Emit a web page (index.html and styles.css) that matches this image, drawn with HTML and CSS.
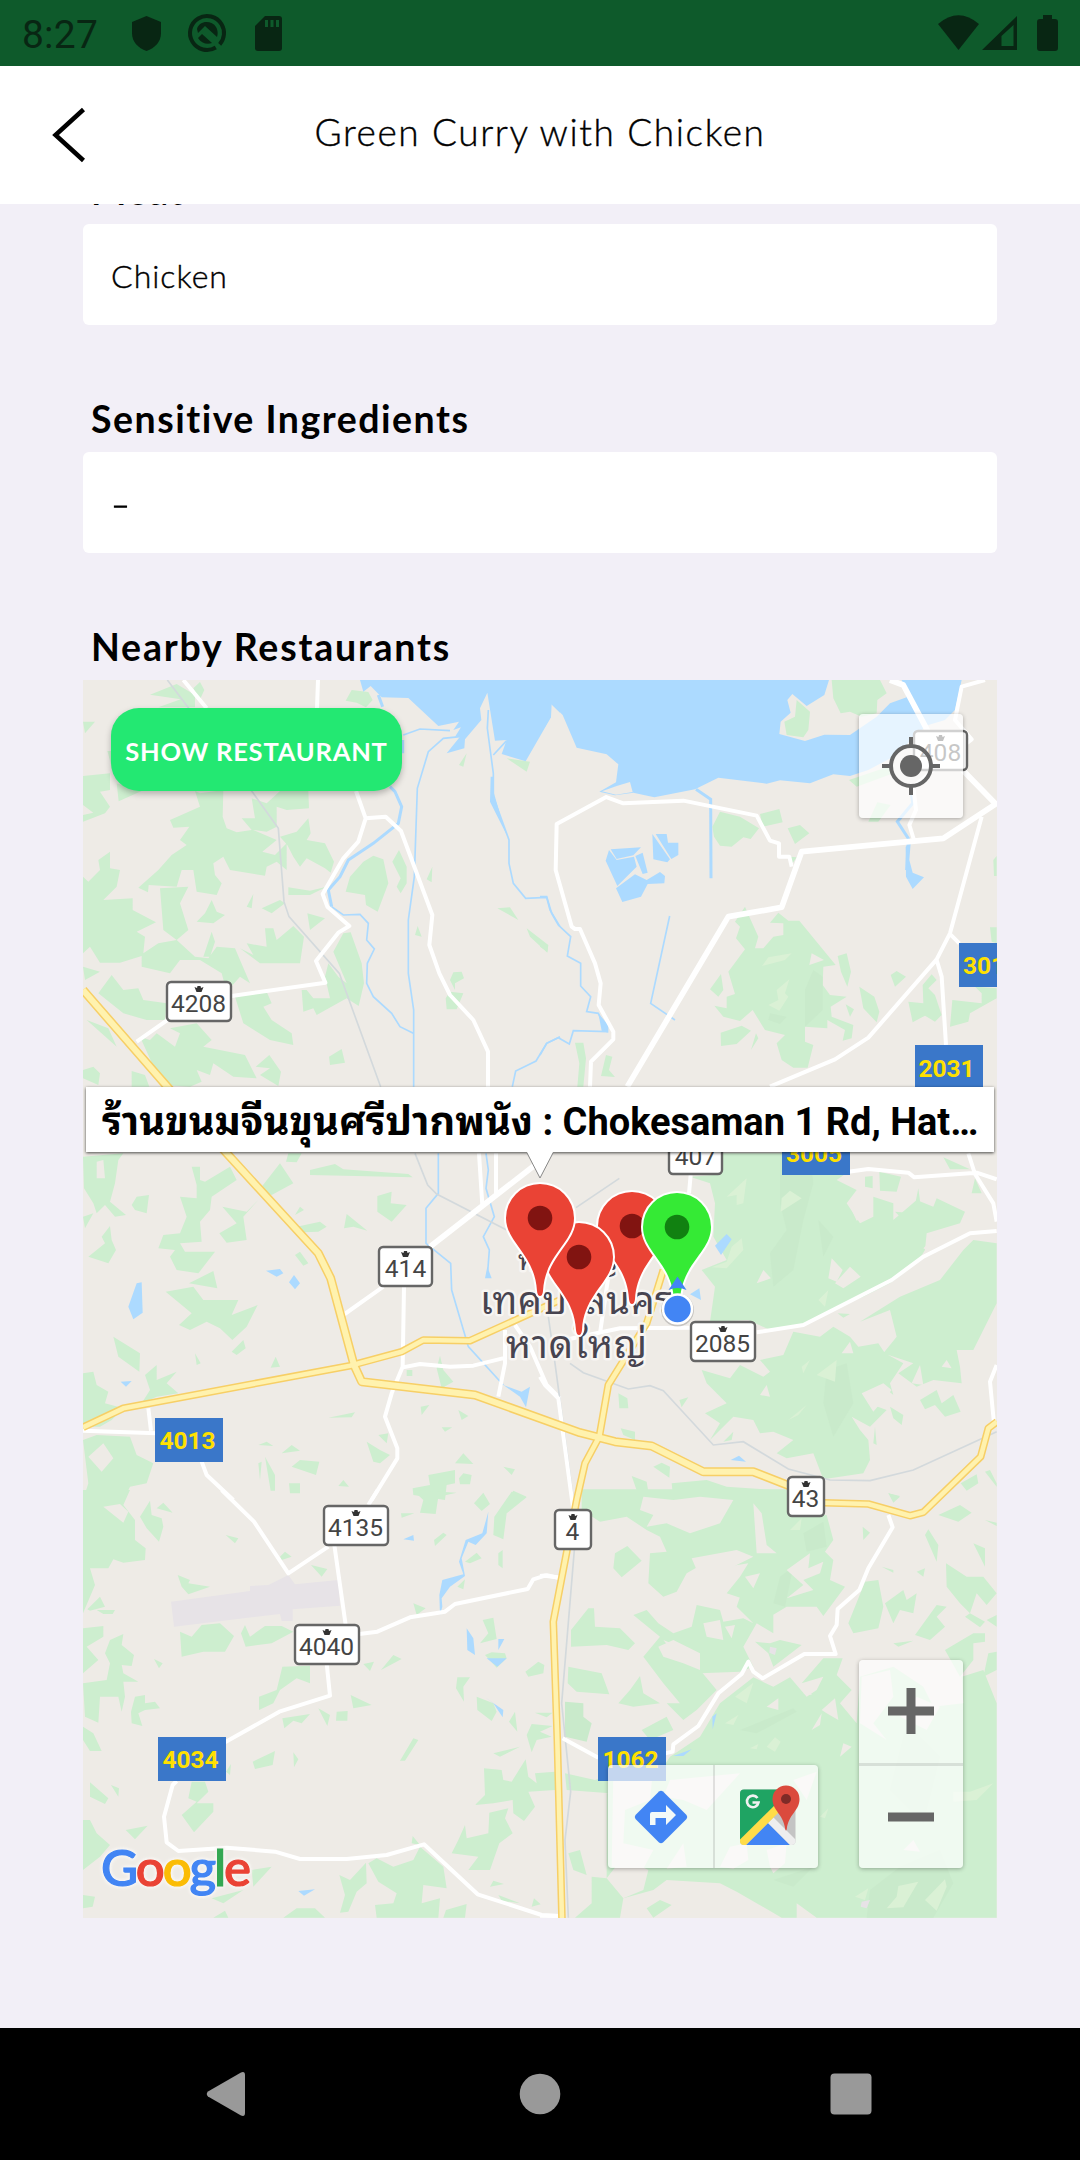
FILE: index.html
```html
<!DOCTYPE html>
<html lang="en">
<head>
<meta charset="utf-8">
<title>Green Curry with Chicken</title>
<link rel="stylesheet" href="styles.css">
</head>
<body>
<div class="phone">
  <div class="status">
    <span class="clock">8:27</span>
    <svg class="status-left" width="152" height="66" viewBox="130 0 152 66">
      <path d="M146.500 16 161 22V33C161 42 155 48 146.500 51 138 48 132 42 132 33V22Z"/>
      <circle cx="207" cy="33" r="17" fill="none" stroke="#082613" stroke-width="4" stroke-dasharray="101 5.800" transform="rotate(59 207 33)"/>
      <path d="M197 29C199 20 212 20 216 27 219 32 217 37 217 37L205 26 198 33ZM198 38 202 34 212 43C207 45 201 43 198 38Z"/>
      <path d="M265 16H279Q282 16 282 19V48Q282 51 279 51H258Q255 51 255 48V26Z"/>
      <path d="M266.500 20V27M272 20V27M277.500 20V27" stroke="#0e5a2b" stroke-width="3"/>
    </svg>
    <svg class="status-right" width="122" height="66" viewBox="937 0 122 66">
      <path d="M938 24Q958.500 6.500 979 24L958.500 50Z"/>
      <path fill-rule="evenodd" d="M982 50 1017 16V50ZM1001.500 46H1013.500V25L1001.500 36Z"/>
      <path d="M1043 15H1052V19H1055Q1058 19 1058 22V48Q1058 51 1055 51H1040Q1037 51 1037 48V22Q1037 19 1040 19H1043Z"/>
    </svg>
  </div>
  <header class="bar">
    <svg class="back" width="36" height="56" viewBox="0 0 36 56"><path d="M31.500 2.500 3.500 28 31.500 53.500" fill="none" stroke="#000" stroke-width="4.500"/></svg>
    <h1 class="title">Green Curry with Chicken</h1>
  </header>
  <main class="content">
    <section class="field">
      <h2 class="label">Meat</h2>
      <div class="value">Chicken</div>
    </section>
    <section class="field">
      <h2 class="label label-sensitive">Sensitive Ingredients</h2>
      <div class="value"><span class="dash">-</span></div>
    </section>
    <section class="field">
      <h2 class="label label-nearby">Nearby Restaurants</h2>
      <div class="map">
        <svg class="tiles" width="914" height="1238" viewBox="83 680 914 1238">
          <defs>
            <path id="pin" d="M-34 0A34 34 0 0 1 34 0C34 25 5 36 3 73Q2.500 78 0 78-2.500 78-3 73C-5 36-34 25-34 0Z"/>
            <path id="crown" d="M-4.500-2-2-1-1.500-3H1.500L2-1 4.500-2 2.500 3H-2.500Z"/>
            <g id="s4"><rect x="1" y="1" width="64" height="39" rx="4"/><use href="#crown" x="33" y="8"/></g>
            <g id="s3"><rect x="1" y="1" width="53" height="39" rx="4"/><use href="#crown" x="27.500" y="8"/></g>
            <g id="s2"><rect x="1" y="1" width="36" height="39" rx="4"/><use href="#crown" x="19" y="8"/></g>
          </defs>
          <g class="land">
            <g transform="translate(80 670) scale(.33333)">
              <path class="wood" d="M210 74 290 42 345 75V112H235L302 88ZM340 55 360 36 373 60 358 92ZM797 92 815 60 865 66 878 90 858 112 830 98ZM9 155H45L15 190ZM82 243H95V290ZM9 318 90 310V360L60 365 90 410 75 430 9 455V435L40 428 9 405ZM110 340 185 363 116 394ZM345 363 360 370 430 360 428 440 440 475 470 487 515 480 485 445H525L515 385 560 400 600 363H685L687 415 620 420 590 410V470L560 485 520 480 590 510 547 545 585 555 620 520V600L590 575 560 590 555 617 450 600 430 560 400 580 405 615 425 640 410 675 350 665 340 600 305 600 290 650 206 645 204 667 175 653 235 600 275 555 320 525 300 510 328 470 280 473 270 450 360 410ZM600 500 650 485 685 445 692 490 680 510 735 520 762 575 752 608 735 595 680 565 660 590 640 560 622 525ZM625 652 690 662 740 650 690 675H625ZM9 620 25 635 60 600 55 570 90 545V595L120 600 110 650 70 690 158 685V720L228 757 170 785 195 800 190 850 235 820 290 810 345 860 385 865 410 830 465 835 480 870 510 940 480 920 440 965 425 910 360 870 300 870 270 910 185 890V858L120 878H60L30 830 9 850ZM240 655 325 650 300 700 325 780 290 810 250 780ZM375 730 395 690 410 725 435 735 400 760 350 755ZM480 835 520 855 500 820 560 830 555 775 580 775 590 810 640 768 672 800 660 880 540 880ZM370 860 395 785 405 815 390 860ZM545 715 600 690 615 700 575 730ZM500 710 520 672 515 715ZM682 730 735 745 690 780ZM797 665 810 620 850 575 880 557 910 568 925 640 893 725 858 705 855 675ZM937 575 957 540 980 590V640L962 670 950 650 962 625ZM1040 628 1057 590 1055 637ZM760 845 790 790 812 787 845 880 852 940 836 1008 800 985 710 1035 700 1015 670 1025 665 960 680 960 700 985 750 985 735 920 745 880 775 920 800 940ZM1097 985 1110 965 1150 970 1130 1018H1100ZM1110 930 1120 907 1145 905 1152 925 1125 940V960ZM1005 795 1013 768 1025 800ZM1137 285 1160 250 1150 290ZM1280 265 1350 275 1340 305ZM1252 715 1290 712 1315 750ZM1340 775 1405 825 1402 848 1350 800ZM747 1160 785 1137 795 1178 750 1185ZM527 1190 568 1155 603 1205 595 1248 540 1215 570 1195ZM465 980 560 965 575 1000 550 1010 575 1050 635 1090 640 1125 570 1110 490 1060ZM180 1100 210 1110 230 1090 285 1130 300 1090 270 1075 350 1060 395 1110 370 1130 495 1155 530 1225 460 1220 400 1180 390 1215 350 1200 365 1235 330 1250 250 1245 225 1200ZM9 890 60 905 15 930ZM55 970 95 915 130 960 175 955 190 990 260 1000 255 1050 200 1050 130 1030ZM20 1050 85 1075 110 1130ZM9 1200 40 1190 60 1210 55 1245 9 1225ZM155 1250V1203L195 1215 208 1250Z"/>
              <path class="water" d="M840 30H1440V128L1413 102V142L1337 274 1265 252 1280 210 1245 212 1222 68 1200 115 1204 150 1155 208 1153 235 1100 250 1140 200H1125L1143 172 1120 180 1137 155 1075 168 985 84 905 82 872 48 850 65ZM1232 320H1240L1242 370 1265 450 1285 505 1230 395Z"/>
              <path class="stream" d="M970 195 1020 177 1110 182M1140 200 1090 205 1045 245 1012 355 1003 620 985 750V910L1001 1020V1250M1225 120 1222 175 1240 310V380L1287 510V580L1300 640 1337 685 1400 682 1410 720 1440 770M1240 255 1280 212M1297 1250 1307 1203 1368 1173 1400 1120 1440 1100"/>
              <path class="stream wide" d="M895 75 908 110M968 210V250M930 350 945 365 965 410 955 460 880 520 805 570 780 620 745 660 755 710"/>
              <path class="stream" d="M755 710 790 735 840 733 865 760 860 810 883 837 862 880 860 940 880 980 935 1030 960 1070 1000 1090"/>
            </g>
            <g transform="translate(540 670) scale(.33333)">
              <path class="water" d="M-2 30H867L853 75 800 108 757 72 742 90 752 128 722 155 718 192 795 213 853 194 930 195 1010 140 1050 100 1100 82 1085 30H1265L1245 120 1215 150 1165 165 1120 200 1095 230 1060 260 985 300 930 318 880 313 810 340 720 331 680 341 535 323 465 358 343 382 280 368 225 376 178 365 228 337 235 283 200 253 110 233 68 135 35 102 33 140-2 197ZM197 572 207 540 230 570 282 560 290 590 232 648ZM212 538 303 532 280 556 230 567ZM286 558 308 548 323 608 308 612ZM337 492 390 568 382 577 340 568ZM347 492H380L384 518H415V555L394 567ZM228 655 285 613 320 630 360 606 375 618 373 640 323 642 303 680 247 696ZM1097 530 1112 520 1108 570 1118 608 1152 622 1118 657 1098 620ZM175 1030 205 1065V1088L185 1082Z"/>
              <path class="ground" d="M186 364 230 348 270 336 278 366 228 374Z"/>
              <path class="stream" d="M389 738 332 1000 405 1050M0 680H20L35 730 55 765 92 800 82 858 122 880V948L152 980 140 1025 175 1030 200 1085 100 1082 88 1122 55 1103 20 1120 0 1155"/>
              <path class="stream wide" d="M468 358 512 388 513 625M1112 350 1118 400 1072 455 1105 505 1100 600"/>
              <path class="wood" d="M875 30H1020L1040 70 1012 90 1010 130 965 140 930 125 902 130 880 85ZM770 90 810 125 805 180 790 202 740 195 733 155 765 140ZM927 330 1060 285V310L950 350ZM1012 397 1052 405 1015 455H985ZM517 470 540 425 600 440 657 475 632 507 610 502 575 530 540 527 522 500ZM660 432 718 417 728 457 668 470ZM743 475 780 465 808 490 765 522ZM750 560 770 562 758 580ZM585 755 615 710 630 745 655 800 645 835H670L700 800 730 795V760L690 758 715 728 745 752H778L887 885 850 890 848 945 870 975 920 980 872 1010 875 1040 940 1065 935 1105 908 1112 915 1080 862 1050V1075L795 1070V1115L820 1125 803 1193H760L725 1170 710 1120 735 1095 675 1080 638 1020 600 1053 550 1040 523 1007 560 1015V980L585 972 565 905 615 838 588 805 600 770ZM510 958 543 912 550 960 535 980ZM542 1088 605 1067 633 1082 590 1122 543 1128ZM633 1140 648 1090 655 1105ZM893 858 920 850 933 905 922 950 903 905ZM917 1003 942 1018 930 1040ZM958 950 1003 980 1018 1025 1010 1057 970 1015ZM1052 915 1070 903 1098 920 1065 950ZM1105 995 1150 1000 1148 945 1175 913 1190 930 1165 955 1185 975 1205 1035 1185 1055 1155 1037 1118 1057ZM1237 990 1325 1000V970L1305 950 1370 955V985L1290 1030 1285 1055 1230 1070ZM1350 772H1370V820L1355 815ZM1360 570 1370 558V618H1362ZM105 1118H130L138 1165 130 1250H112L118 1180ZM183 1218 198 1155 217 1160 207 1200 225 1221ZM0 810 24 830 22 845 0 830Z"/>
              <path class="wood-light" d="M666 888 685 862 755 850 735 870ZM685 1005 715 990 710 960 748 928 735 970 745 980 718 1022Z"/>
              <path class="wood-dark" d="M820 900 848 920V1020L795 1070V960ZM690 1030 740 1040 720 1062 685 1050Z"/>
              <path class="ground" d="M808 885 815 850 852 870Z"/>
            </g>
            <g transform="translate(80 1070) scale(.33333)">
              <path class="wood" fill-rule="evenodd" d="M9 260 130 250 115 270 105 340 90 395 138 435 105 440 75 405 50 430 40 400 12 355ZM50 275V325H75L70 270ZM155 405 170 380 207 375 200 430 165 420ZM9 440 40 430 15 475ZM25 560 75 520 65 500 90 468 95 510 108 540 85 580ZM335 290H360V330L375 335 450 290 470 330 395 380 390 420 360 455 365 515 300 520 315 545 405 545 355 610 290 600 270 560 285 540 235 535 250 495 300 490 320 440 300 380 350 385V345ZM427 410 500 425 535 390 490 440 500 510 440 518 418 490 470 460ZM545 350 600 280 640 340 575 375 555 370ZM618 275 625 250H665L650 277ZM645 435 660 410 672 420ZM650 470 720 455 740 470 715 485 670 487ZM645 555 660 545 685 580 670 587ZM690 300 765 282 790 298 985 312 998 322 690 315ZM892 378 935 365 932 400 980 405 935 455 892 425ZM792 475 800 432 862 482 820 470ZM327 640 400 603 412 655ZM257 665 340 650 370 690H475L455 735 533 705 500 770 457 810 420 775 380 755 330 780 297 765 335 730ZM100 800 180 850 178 905 115 860ZM455 845 490 810 497 835 470 855ZM345 850 362 880 350 885ZM572 893 587 860 600 890ZM9 910 40 905 50 945 85 965 75 1000 130 1015 95 1050 60 1070H30L9 1060ZM195 915 230 885V930L290 905 260 940 295 970 230 980 185 1000 210 960ZM1070 895 1080 857 1090 900 1120 935 1085 955ZM980 900 997 900V918H980ZM9 1110 50 1095 150 1100 170 1155 220 1180 200 1240 150 1250 130 1290H9L25 1240ZM25 1160 65 1205 100 1165 70 1120ZM535 1125 560 1115 580 1128ZM605 1150 635 1125 660 1142ZM555 1160 585 1215V1262H572ZM535 1180 545 1175 540 1230ZM635 1190 660 1170 718 1175 708 1215ZM627 1240H660V1270L630 1270ZM775 1248 790 1230 807 1250ZM745 1043 825 1027 815 1042ZM860 1115 900 1140 930 1155 900 1180 880 1175ZM895 1095 925 1090 920 1120ZM1022 1010 1048 1005 1025 1035ZM1135 1020 1165 1038 1145 1050ZM1085 1072H1117L1095 1085ZM1045 1215 1125 1200V1240L1100 1245 1095 1290 1000 1275 998 1255 1050 1245ZM1137 1225 1150 1210 1175 1215 1170 1243H1140ZM1125 1180 1150 1150 1180 1182ZM1270 1190 1305 1198 1295 1215ZM1280 1290 1300 1262 1340 1280Z"/>
              <path class="water" d="M558 602 600 597 610 610 590 620ZM627 637 642 615 660 640 645 658ZM170 640 185 637 188 728 160 748 145 710ZM122 935 155 933 138 950ZM1270 945 1325 965 1350 950 1338 1012 1320 980ZM1215 625 1222 590 1235 625Z"/>
              <path class="stream" d="M1075 250V370L1038 415V520L1112 580 1115 660 1165 830 1270 945M1218 250 1225 300 1218 355 1243 440 1210 500 1228 540 1222 620"/>
            </g>
            <g transform="translate(540 1070) scale(.33333)">
              <path class="wood" d="M450 320 520 315 500 250H900L925 305 890 330 950 360 920 400 960 460 1000 440 1000 380 1060 400 1060 450 1130 390 1180 410 1190 385 1275 425 1260 460 1160 490 1155 540 1130 580 1050 640 970 680 850 730 780 765 690 780 625 750 510 755 525 650 485 600 560 570 520 500 525 400 510 340ZM485 900 570 925 600 885 670 920 690 905 660 870 730 855 760 785 840 800 880 770 930 800 955 830 1015 820 1035 850 1090 880 1050 940 1060 975 1030 950 970 970 985 1000 1040 1020 990 1070 935 1040 960 1080 985 1110 990 1170 970 1210 850 1228 820 1150 740 1165 710 1150 760 1110 700 1085 660 1090 640 1050 580 1040 510 1110 540 1060 495 1030 560 1000 500 940ZM1080 680 1200 630 1270 540 1300 510 1370 520V700L1300 840H1250L1260 890 1265 940 1180 930 1130 950 1075 910 1120 880 1030 850 1070 800 1050 720 960 755ZM1018 305 1083 320 1070 365 1020 362ZM975 320 998 318V355L975 350ZM1065 425 1120 430 1135 355 1145 430 1080 440ZM1210 262 1290 298H1230ZM1295 370 1305 325 1325 370ZM1140 990 1190 960 1205 1000 1240 975 1262 1025 1215 1040 1185 1005 1155 1018ZM1050 1010 1090 1035 1085 1065 1060 1045ZM1262 1240 1310 1213 1315 1240 1280 1262ZM1335 1205 1350 1200 1370 1240V1250ZM1045 1270 1080 1278 1060 1290ZM235 970 262 985 265 1015H238ZM418 990 445 982 425 1012ZM242 1075 285 1085V1110L250 1095ZM340 1190 365 1178 390 1190 388 1223ZM275 1218 320 1235 325 1265 350 1290H300ZM395 1240 500 1230 560 1250 700 1260 740 1290H400ZM1000 1120 1005 1070 1010 1125ZM893 730 930 732 910 743ZM550 1115 580 1085 575 1110Z"/>
              <path class="wood-dark" d="M720 250H810L820 340 790 450 760 600 700 650 690 550 740 480 720 400ZM860 900 920 880 940 1000 880 1100 850 1000ZM835 450 880 500 850 560Z"/>
              <path class="wood-light" d="M725 385 750 362 785 385 722 425ZM560 380 620 325 610 400 590 405 590 375ZM515 592 560 575 575 530 605 505 610 540 560 595ZM745 1050 800 1005 775 1035ZM830 915 890 870 885 935ZM785 890 810 870 790 910ZM835 690 865 660 855 710Z"/>
              <path class="ground" d="M935 420 960 385 975 440 950 452ZM865 625 875 565 908 600 890 635ZM885 640 930 590 962 620 910 655ZM965 970 1030 940 1055 960 1000 1025ZM650 640 670 600 693 625ZM1150 535 1190 495 1235 520 1190 540 1200 565ZM1205 890 1220 870 1235 895ZM660 975 680 945 690 980ZM1115 940 1140 885 1150 945ZM905 850 930 815 940 850Z"/>
              <path class="water" d="M525 527 560 492 575 508 543 555ZM450 673 478 655 483 690ZM572 1170 597 1157 618 1175Z"/>
            </g>
            <g transform="translate(80 1490) scale(.33333)">
              <path class="wood" fill-rule="evenodd" d="M9 0H150L130 45 165 90V150L197 175 195 210 130 218 100 208 85 235H30L45 285 9 370V290ZM70 50 130 98 145 65 120 42ZM180 80 210 32 215 75 245 85 250 110 237 155 200 115ZM230 55 250 38 278 68ZM437 135 475 145 465 160ZM600 200 615 185 635 200 605 210ZM693 225 742 237 725 260ZM22 358 60 320 75 350 30 362ZM50 360H105L98 372H70ZM293 255 330 270 325 280 390 290 325 313 305 290ZM300 425 335 440 365 405 420 400 462 438 435 485H370L305 500ZM483 430 495 405 510 440 555 408 605 408 640 425 575 460 497 470ZM9 415 70 408V440L20 470 55 510 9 550ZM75 490 90 450 130 432 125 465 162 495 155 528 125 525 130 550 175 575 130 575 135 620 125 665 115 620H60L55 698 15 680 9 580 80 570 90 520ZM222 507 248 520 237 535ZM165 620 195 615V640L225 635 240 655 195 660 175 670 187 708 155 700 153 665ZM9 710 40 730 65 783H30L9 750ZM537 620 590 600 607 530 690 527V580L650 565 600 600 580 640 537 660ZM607 685 690 672 665 700 640 692 613 715ZM715 655 750 675 742 708ZM770 665 803 663 802 692H768ZM812 615 875 645 820 655ZM850 522 882 515 870 543ZM903 540 940 495 965 507ZM1000 340 1037 355 1010 375ZM963 70H1003L965 83ZM998 0 1130 8 1075 20 1067 72 1020 68 1030 30ZM1182 40 1210 8 1230 42 1205 63ZM1243 80 1295 5 1340 22 1280 70 1270 148 1240 135ZM1062 150 1090 128 1100 135 1065 168ZM1155 215 1190 188 1205 205 1170 220ZM1255 190 1268 180V235L1255 225ZM1132 290 1155 268 1150 298ZM1200 460 1225 430 1208 390 1240 383 1250 447ZM1215 495 1235 487 1275 490 1280 505 1250 533ZM1336 545 1375 515 1393 525 1390 550 1345 560ZM1128 595 1132 562H1170L1150 590 1152 635ZM1190 620 1240 640 1250 665 1235 693 1192 660ZM1287 695 1305 665 1312 725ZM1340 735 1355 702 1418 708 1380 725 1415 740 1370 750 1355 787ZM1240 790 1320 770 1260 800ZM1365 668H1418L1400 682ZM960 812 1000 745 1015 750 975 812ZM640 787 655 808 642 832ZM518 815 585 783 578 825 525 837ZM438 845 453 822 450 855ZM335 875H375L385 905 350 940H400V965L342 1027 305 975 350 935 325 925ZM30 877 85 925 75 942 30 920ZM93 885 117 895 115 920ZM137 1020 203 1007 165 1048ZM9 990H30L50 1030 90 1065 60 1100 9 1140ZM1212 835 1265 840 1270 870 1295 875 1337 808 1345 860 1370 880 1365 850 1425 845V900L1345 905 1365 950 1332 993 1300 970 1298 930 1240 940 1185 945 1215 915ZM1228 968 1285 955 1275 985 1298 1030 1258 1060 1230 1140 1165 1140 1195 1100 1115 1090 1135 1050 1155 1005 1160 1045 1225 1030ZM865 1120 890 1105 940 1130 1000 1110 1020 1070 1090 1130 1100 1195 1030 1185 1025 1240 1080 1225 1075 1283H890L885 1245 940 1240 950 1210 895 1175ZM778 1155 810 1170 858 1118 860 1180 830 1205 805 1265 780 1268 795 1215ZM610 1283 650 1255H705L735 1283ZM400 1283 435 1262 445 1283ZM9 1215 45 1220 38 1250 9 1255ZM515 1140 575 1130 520 1190ZM395 1225 490 1200 430 1240ZM1255 1215 1320 1240 1265 1232ZM1230 1190 1240 1172 1272 1182ZM1355 1250 1362 1225 1382 1243ZM1098 1260 1160 1242 1155 1283H1090ZM995 1060 998 1038 1020 1065Z"/>
              <path class="airport" d="M273 335 510 303V288L565 285 625 255 645 283 775 270 780 347 638 358V393H605L600 372 282 410Z"/>
              <path class="water" d="M970 148 1000 135 1002 152ZM1225 65 1220 130 1187 165 1165 155 1145 205 1155 258 1110 290 1085 325 1087 350 1080 375 1078 315 1087 270 1150 253 1137 215 1157 150 1207 130ZM1160 415 1180 445 1185 495 1162 480ZM1255 447H1273L1255 480ZM1220 505H1280L1252 530ZM1215 622 1270 660 1268 682 1240 640ZM655 1203 705 1198 672 1217Z"/>
            </g>
            <g transform="translate(540 1490) scale(.33333)">
              <path class="wood" d="M125-2H740L745 75H860L880 150 855 185 880 210 870 270 915 290 850 378 830 350 740 350 690 380 650 340 560 310 600 260 625 220 560 230 500 215 440 250 410 305 370 320 325 280 330 190 380 185 360 140 320 120 260 80 180 95 125 60ZM220 235 225 190 262 168 305 212 245 262ZM93 420 145 355H162L165 410 240 415 285 460 265 480 200 465 93 470ZM280 375 320 360 355 400 400 430 455 410 470 345 540 360 550 395 610 385 640 400 590 350 600 320 690 335 700 375 700 430 650 400 610 470 640 530 600 545 480 550V490L400 450 355 470 370 500 430 520 480 540 530 600 470 660 430 690 380 640 420 640 370 580 340 540 310 500 360 440ZM85 530 185 550 208 613 110 605 83 580ZM235 640 270 600 300 558 310 610 360 640 280 650ZM645 455 690 460 720 450 785 465 700 530 685 490ZM305 720 380 680 400 720 330 750ZM390 800 480 740 540 640 640 562 700 590 750 562 800 620 830 600 850 560 785 580 850 505H908L890 555 935 600 900 640 950 700 960 560 1060 530 1150 590 1180 650 1270 640 1265 560 1330 540 1370 640V1283H830L770 1240V1283H725L590 1205 540 1180 380 1170 340 1200 250 1225 240 1283H105L155 1240V1160L200 1165V830H370ZM925 400 975 275 1015 270 1030 350 1015 415 940 430ZM1035 340 1090 300 1100 330 1130 310 1120 370 1080 360 1060 400ZM1218 220 1280 260H1330L1370 310 1340 345 1310 310 1290 370 1260 340 1220 290ZM1195 75 1260 45 1295 68 1255 95ZM1155 135 1165 118 1195 165 1190 215ZM1275 380 1290 370 1335 395 1320 412ZM1060 460 1120 452 1075 470ZM1125 435 1190 345 1220 350 1190 380 1215 410 1170 450ZM1215 480 1300 430H1335V455L1300 460V510L1260 560ZM1345 490 1370 485V540L1330 560ZM1025 230 1060 240V248ZM1130 245 1155 235 1150 260ZM968 110 990 128 970 150ZM1300 160 1335 175V230ZM1335 90 1370 98 1370 108ZM1340 390 1370 375V410ZM75 850 165 870 210 855V910L150 905 80 900ZM85 1090 120 1080 140 1155 100 1140ZM320 1255 360 1230 395 1245 340 1283ZM1045 10 1080 20 1060 38Z"/>
              <path class="wood-dark" d="M75 635 130 640V680L155 700 140 755 75 740ZM735 350 700 340 720 260 760 230ZM790 130 850 95 860 170 800 185ZM600 720 760 655 770 665 650 730ZM990 1200 1080 1130 1200 1080 1240 1180 1180 1283H980ZM700 1170 820 1130 760 1190ZM1100 700 1200 800 1150 1000 1050 900Z"/>
              <path class="ground" d="M310 20 400 30 480 20 580 30 540 100 450 130 380 100 320 110 340 75 300 60ZM640 40 665 70 680 165 710 190 650 190ZM455 205 590 180 640 200 560 240 540 270 470 240ZM740 240 810 190 805 235 850 215 840 250 790 270 820 300 740 325 790 285ZM615 260 660 250 640 295ZM490 400 540 390 550 450 500 440ZM555 410 585 405 575 445ZM370 450 480 495 480 515 420 510ZM220 845 340 830 330 930 255 960 250 1060 340 1080 310 1136 215 1130ZM390 870 600 850 500 960 430 930 370 920ZM540 1130 570 1070 620 1060 625 1110 580 1136ZM690 1130 680 1080 740 1060 735 1120 700 1150ZM430 1060 380 1136 440 1130ZM680 650 715 625 715 660ZM790 610 810 600 815 615ZM845 660 885 625 895 690 860 670ZM815 720 845 670 840 705ZM900 800 910 760 935 770ZM760 870 830 845 800 930ZM965 560 1050 540 1060 620 1000 700 1040 750 960 700ZM1130 620 1200 650 1160 720 1080 680ZM200 1165 250 1100 325 1140 310 1200 250 1225ZM1090 1080 1120 1050 1140 1085Z"/>
              <path class="wood-light" d="M585 620 640 578 620 640ZM555 700 595 675 580 705ZM630 775 655 762 650 778ZM680 770 705 742 722 755 705 785ZM840 980 865 955 855 985ZM1040 1255 1070 1220 1075 1188 1135 1175 1090 1252ZM1155 1230 1215 1168 1220 1190 1190 1262ZM945 1220 985 1195 975 1230ZM1240 905 1290 905 1360 880 1310 930 1240 935ZM750 120 785 85 780 120Z"/>
              <path class="airport" d="M690 470 710 475 705 495 688 488ZM965 1235 990 1230 980 1255 962 1250Z"/>
              <path class="water" d="M517 680 530 670 518 718ZM400 798 455 778 430 798Z"/>
            </g>
          </g>
          <g class="roads">
            <g transform="translate(80 670) scale(.33333)">
              <path class="rail" d="M262 30 520 370 595 475 612 695 627 740 778 910 902 1250"/>
              <path class="road" d="M310 30 380 115M714 30 711 115M828 363 857 445 835 515 790 565 728 672 742 710 808 768 775 788 708 873 736 938 455 978M857 445 917 440 963 483 1057 735 1048 825 1078 910 1110 975 1180 1050 1224 1145V1250M265 1048 170 1115"/>
            </g>
            <g transform="translate(540 670) scale(.33333)">
              <path class="road" d="M200 380 50 462 47 600 95 770 105 777H120L165 880 182 940 176 1005 220 1085V1108L153 1175 150 1250M195 380 250 400 430 392 650 437 690 512 717 520V560H748L755 590M1335 30 1265 50 1245 150 1295 208 1240 250 1120 350 1128 420 1108 465 1122 510M1325 440 1230 790 1190 868 985 1103 885 1168 690 1250M1228 790 1258 820M1190 870 1205 920 1218 1125"/>
              <path class="road main" d="M262 1250 565 740 725 712 785 545 1210 505 1370 400M1050 30 1090 45 1175 205 1370 405"/>
            </g>
            <g transform="translate(80 1070) scale(.33333)">
              <path class="rail" d="M1005 250 1043 345 1070 372 1280 480"/>
              <path class="road" d="M790 735 910 650M972 650 968 890 935 970 915 1040 952 1135V1165L875 1290M965 893 1020 882 1110 890 1180 887 1280 862M1275 780V880L1255 980M1305 765 1350 830 1400 945 1440 985M1197 250 1207 405M1248 250V380M9 1082 230 1090M205 1015 213 1082M365 1175 380 1215 460 1290"/>
              <path class="road main" d="M1050 530 1365 285"/>
            </g>
            <g transform="translate(540 1070) scale(.33333)">
              <path class="rail" d="M238 325 108 413M90 880 130 908 265 957 330 947 370 962 520 1125 610 1115 745 1197 870 1230 990 1232 1120 1200 1370 1085M25 740 45 880 100 1290"/>
              <path class="road" d="M925 305 985 297 1105 308 1123 322 1310 308 1370 328M1285 250 1305 312 1360 400 1370 455M650 787 790 765 1055 630 1150 560 1290 490 1370 483M60 813 240 775 455 773M452 315 447 370M205 620 180 790M0 920 15 945 55 985 100 1320M1370 885 1350 935 1362 1060"/>
            </g>
            <g transform="translate(80 1490) scale(.33333)">
              <path class="road" d="M425 0 522 95 625 250 745 170M893 0 865 45M763 165 797 405M838 432 892 425 990 382 1095 365 1125 342 1343 297 1360 268 1395 257 1440 263M740 520 750 617 598 665 435 757M290 873 278 885 252 980 260 1057 295 1083 440 1073 585 1085 660 1107H800L920 1095 1032 1063 1193 1213 1385 1275 1440 1278"/>
            </g>
            <g transform="translate(540 1490) scale(.33333)">
              <path class="rail" d="M103 180 65 640 92 905 75 1050 85 1283"/>
              <path class="road" d="M1045 75 1058 112 985 235 958 300 893 357 890 405 870 438 887 492H793L668 565 640 545 625 515 605 552 535 610 475 708 400 763 398 785 375 790M68 745 175 803M0 258 20 256 55 263M0 1277 60 1278"/>
            </g>
          </g>
          <g class="highways-edge">
            <path d="M83 990 167.300 1086.700 226.700 1153.300 318.300 1253.300 330.700 1278.300 354 1365 361.700 1381.700 475 1395 580 1432.700 615 1441.700 651.700 1446 703.300 1471.700H753.300L800 1490"/>
            <path class="minor" d="M83 1427.300 123.300 1408.300 350 1365.700 401.700 1351.700 423.300 1340 470 1340.700 560 1300 632 1240M663.300 1270 646.700 1323.300 608.300 1385 599.300 1436.700 585 1463.300 576.700 1500 553.300 1621.700 557.300 1740 562 1920M997 1421.700 988.300 1428.300 980.700 1456.700 923.300 1512.300 910 1515.700 868.300 1504 823 1502.700"/>
          </g>
          <g class="highways">
            <path d="M83 990 167.300 1086.700 226.700 1153.300 318.300 1253.300 330.700 1278.300 354 1365 361.700 1381.700 475 1395 580 1432.700 615 1441.700 651.700 1446 703.300 1471.700H753.300L800 1490"/>
            <path class="minor" d="M83 1427.300 123.300 1408.300 350 1365.700 401.700 1351.700 423.300 1340 470 1340.700 560 1300 632 1240M663.300 1270 646.700 1323.300 608.300 1385 599.300 1436.700 585 1463.300 576.700 1500 553.300 1621.700 557.300 1740 562 1920M997 1421.700 988.300 1428.300 980.700 1456.700 923.300 1512.300 910 1515.700 868.300 1504 823 1502.700"/>
          </g>
          <g class="city">
            <text class="district" x="518" y="1270" textLength="100">หาดใหญ่</text>
            <text x="480" y="1314" textLength="193">เทศบาลนคร</text>
            <text x="506" y="1358" textLength="141">หาดใหญ่</text>
          </g>
          <g class="shields">
            <use href="#s4" x="166" y="981"/><use href="#s3" x="378" y="1246"/><use href="#s3" x="668" y="1134"/>
            <use href="#s4" x="690" y="1321"/><use href="#s2" x="787" y="1476"/><use href="#s2" x="554" y="1509"/>
            <use href="#s4" x="323" y="1505"/><use href="#s4" x="294" y="1624"/><use href="#s3" x="913" y="730"/>
          </g>
          <g class="numbers">
            <text x="199" y="1012">4208</text><text x="406" y="1277">414</text><text x="696" y="1165">407</text>
            <text x="723" y="1352">2085</text><text x="806" y="1507">43</text><text x="573" y="1540">4</text>
            <text x="356" y="1536">4135</text><text x="327" y="1655">4040</text><text x="941" y="761">408</text>
          </g>
          <g class="plates">
            <path d="M959 943H1027V987H959ZM915 1045H983V1089H915ZM782 1131H850V1175H782ZM155 1418H223V1462H155ZM158 1737H226V1781H158ZM598 1737H666V1781H598Z"/>
            <text x="991.500" y="974.500">3017</text><text x="947" y="1077">2031</text><text x="814.500" y="1162.500">3005</text>
            <text x="188" y="1449.500">4013</text><text x="191" y="1768.500">4034</text><text x="631" y="1768.500">1062</text>
          </g>
          <g class="pins">
            <use href="#pin" x="632" y="1226"/><circle cx="632" cy="1226" r="12.300"/>
            <use class="me" href="#pin" x="677" y="1227"/><circle class="me-dot" cx="677" cy="1227" r="12.300"/>
            <use href="#pin" x="579" y="1257"/><circle cx="579" cy="1257" r="12.300"/>
            <use href="#pin" x="540" y="1218"/><circle cx="540" cy="1218" r="12.300"/>
          </g>
          <path fill="#4285f4" d="M677.500 1276.500 686.500 1290Q677.500 1286 668.500 1290Z"/>
          <circle cx="677.500" cy="1310" r="16.500" fill="#8886" />
          <circle cx="677.500" cy="1309" r="14.500" fill="#4285f4" stroke="#fff" stroke-width="2.500"/>
        </svg>
        <button class="show">SHOW RESTAURANT</button>
        <div class="ctl locate">
          <svg width="60" height="60" viewBox="-30 -30 60 60"><circle r="11"/><circle r="20" fill="none" stroke="#666" stroke-width="4"/><path d="M-29 0H-20M20 0H29M0-29V-20M0 20V29" stroke="#666" stroke-width="4"/></svg>
        </div>
        <div class="callout"><span class="callout-text"><span class="thai">ร้านขนมจีนขุนศรีปากพนัง</span><span class="latin"> : Chokesaman 1 Rd, Hat…</span></span></div>
        <svg class="tail" width="30" height="28" viewBox="0 0 30 28"><path d="M2 0 15 26 28 0Z" fill="#fff"/><path d="M2 1 15 26 28 1" fill="none" stroke="#888" stroke-width="1"/></svg>
        <div class="ctl zoom">
          <div class="half"><svg width="46" height="46" viewBox="0 0 46 46"><path d="M0 18.500H18.500V0H27.500V18.500H46V27.500H27.500V46H18.500V27.500H0Z"/></svg></div>
          <div class="half lower"><svg width="46" height="46" viewBox="0 0 46 46"><path d="M0 18.500H46V27.500H0Z"/></svg></div>
        </div>
        <div class="ctl tools">
          <div class="tool">
            <svg width="54" height="54" viewBox="0 0 54 54"><path fill="#4285f4" d="M25 1.500Q27 0 29 1.500L52.500 25Q54 27 52.500 29L29 52.500Q27 54 25 52.500L1.500 29Q0 27 1.500 25Z"/><path fill="#f3faf8" d="M16 35V24Q16 22 18 22H32V15L42 25 32 35V28H21.500V35Z"/></svg>
          </div>
          <div class="tool second">
            <svg width="62" height="60" viewBox="738 1785 62 60">
              <clipPath id="tile"><rect x="739" y="1789.500" width="55.500" height="55.500" rx="4"/></clipPath>
              <g clip-path="url(#tile)">
                <path fill="#c4c4c4" d="M739 1789H795V1845H739Z"/>
                <path fill="#1fa463" d="M739 1789H782V1801L739 1842Z"/>
                <path fill="#4285f4" d="M767 1823 789 1845H745Z"/>
                <path fill="#eee" d="M767 1823 772.500 1817.500 795 1840V1845H789Z"/>
                <path fill="#ffdc48" d="M739 1845V1839.500L776 1803 780 1810 745 1845Z"/>
              </g>
              <path d="M756.500 1798A5.800 5.800 0 1 0 757.500 1802.500H751.500" fill="none" stroke="#f1f1f1" stroke-width="2.600"/>
              <path fill="#db4a3d" d="M785 1785.500A13.500 13.500 0 0 1 798.500 1799C798.500 1811 787.500 1814 785.800 1829Q785 1832 784.200 1829C782.500 1814 771.500 1811 771.500 1799A13.500 13.500 0 0 1 785 1785.500Z"/>
              <circle cx="785" cy="1799" r="5" fill="#7e2b27"/>
            </svg>
          </div>
        </div>
        <svg class="logo" width="170" height="70" viewBox="93 1835 170 70">
          <text x="101" y="1886" textLength="150"><tspan class="blue">G</tspan><tspan class="red">o</tspan><tspan class="yellow">o</tspan><tspan class="blue">g</tspan><tspan class="green">l</tspan><tspan class="red">e</tspan></text>
        </svg>
      </div>
    </section>
  </main>
  <nav class="nav">
    <svg width="44" height="46" viewBox="0 0 44 46"><path d="M35 1.500Q39 0 39 4V42Q39 46 35 44.500L2 25.500Q-.5 23 2 20.500Z"/></svg>
    <svg width="42" height="42" viewBox="0 0 42 42"><circle cx="21" cy="21" r="20.300"/></svg>
    <svg width="42" height="42" viewBox="0 0 42 42"><rect x=".5" y=".5" width="41" height="41" rx="4"/></svg>
  </nav>
</div>
</body>
</html>
```
FILE: styles.css
```css
* { box-sizing: border-box; }
body { margin: 0; background: #000; font-family: Lato, "Open Sans", sans-serif; color: #000; }
.phone { width: 1080px; height: 2160px; display: flex; flex-direction: column; overflow: hidden; }

.status { height: 66px; flex: none; background: #0e5a2b; display: flex; align-items: center; padding: 0 21px 0 22px; fill: #082613; }
.clock { width: 108px; font: 400 39px/66px Roboto, sans-serif; color: #082613; letter-spacing: .2px; padding-top: 3px; }
.status-right { margin-left: auto; }

.bar { position: relative; z-index: 1; height: 138px; flex: none; background: #fff; display: grid; grid-template-columns: 90px 1fr 90px; align-items: center; }
.back { margin-left: 52px; }
.title { margin: 0 0 7px; font-weight: 300; font-size: 37px; line-height: 50px; text-align: center; white-space: nowrap; letter-spacing: 1.6px; -webkit-text-stroke: .4px #000; }

.content { height: 1824px; flex: none; background: #f2eff7; overflow: hidden; padding: 0 83px; display: flex; flex-direction: column; gap: 69px; }
.field:first-child { margin-top: -38px; }
.label { margin: 0; padding: 0 0 8px 8px; font-weight: 700; font-size: 37.5px; line-height: 50px; letter-spacing: 1.5px; white-space: nowrap; }
.label-nearby { letter-spacing: 1.8px; }
.value { height: 101px; background: #fff; border-radius: 6px; padding: 1px 28px 0; display: flex; align-items: center; font-weight: 300; font-size: 32px; letter-spacing: 1px; -webkit-text-stroke: .4px #000; }
.dash { transform: scaleX(1.6); transform-origin: left; -webkit-text-stroke-width: .8px; }

.map { position: relative; width: 914px; height: 1238px; overflow: hidden; background: #eeebe6; }
.tiles { display: block; }
.ground { fill: #eeebe6; }
.wood { fill: #cdeecf; }
.wood-dark { fill: #c9eacb; }
.wood-light { fill: #daf1d5; }
.water { fill: #acdaff; }
.airport { fill: #e7e3e7; }
.stream { fill: none; stroke: #acdaff; stroke-width: 5; }
.stream.wide { stroke-width: 9; }
.rail { fill: none; stroke: #d3d9dc; stroke-width: 5; }
.road { fill: none; stroke: #fff; stroke-width: 12; stroke-linejoin: round; }
.road.main { stroke-width: 17; }
.highways-edge { fill: none; stroke: #f7cf66; stroke-width: 9; stroke-linejoin: round; }
.highways-edge .minor { stroke-width: 7.6; }
.highways { fill: none; stroke: #fff2ae; stroke-width: 6; stroke-linejoin: round; }
.highways .minor { stroke-width: 4.6; }
.city { font: 400 38px "Noto Sans Thai Looped", Loma, Waree, "Noto Sans Thai", "Noto Sans", sans-serif; fill: #474450; stroke: #f7f5f2; stroke-width: 5px; paint-order: stroke; stroke-linejoin: round; }
.district { font-size: 28px; }
.shields { fill: #fff; stroke: #666; stroke-width: 2.4; }
#crown { fill: #333; stroke: none; }
.numbers { font: 400 24.5px Roboto, sans-serif; fill: #444; text-anchor: middle; }
.plates { font: 700 24.5px Roboto, sans-serif; text-anchor: middle; fill: #ffe000; }
.plates path { fill: #3a77c9; }
.plates text, .numbers text { transform: translate(-.5px, -.5px); }
.pins { fill: #ea4335; }
.pins use { stroke: #fff; stroke-width: 4px; paint-order: stroke; }
.pins circle { fill: #811411; }
.pins .me { fill: #35ea35; }
.pins .me-dot { fill: #118111; }

.show { position: absolute; left: 28px; top: 28px; width: 291px; height: 83px; padding: 2px 0 0; border: 0; border-radius: 28px; background: #23e872; color: #fff; font: 700 25.5px Lato, sans-serif; letter-spacing: .8px; white-space: nowrap; box-shadow: 0 3px 6px rgba(0,0,0,.25); }

.ctl { position: absolute; background: rgba(255,255,255,.7); border-radius: 4px; box-shadow: 0 1px 4px rgba(0,0,0,.3); fill: #666; }
.locate { left: 776px; top: 34px; width: 104px; height: 104px; display: flex; align-items: center; justify-content: center; }
.zoom { left: 776px; top: 980px; width: 104px; height: 208px; display: flex; flex-direction: column; }
.half { flex: 1; display: flex; align-items: center; justify-content: center; }
.half.lower { border-top: 3px solid rgba(0,0,0,.1); }
.tools { left: 525px; top: 1085px; width: 210px; height: 103px; display: flex; }
.tool { flex: none; width: 105px; display: flex; align-items: center; justify-content: center; }
.tool.second { border-left: 2px solid rgba(0,0,0,.1); padding-left: 6px; padding-bottom: 4px; }

.callout { position: absolute; left: 3px; top: 407px; width: 908px; height: 65px; background: #fff; box-shadow: 0 1px 3px rgba(0,0,0,.7); padding: 0 16px; display: flex; align-items: center; }
.callout-text { font: 700 38px/60px Roboto, sans-serif; white-space: pre; }
.thai { display: inline-block; font-family: "Noto Sans Thai Looped", Loma, Waree, "Noto Sans Thai", Roboto, sans-serif; font-size: 39.7px; line-height: 60px; }
.tail { position: absolute; left: 442px; top: 472px; }
.logo { position: absolute; left: 10px; top: 1155px; font: 500 51px Lato, sans-serif; stroke-width: 1.2px; filter: drop-shadow(0 0 1.5px #f7f5f2) drop-shadow(0 0 1.5px #f7f5f2) drop-shadow(0 0 1px #f7f5f2); }
.blue { fill: #4285f4; stroke: #4285f4; }
.red { fill: #ea4335; stroke: #ea4335; }
.yellow { fill: #fbbc05; stroke: #fbbc05; }
.green { fill: #34a853; stroke: #34a853; }

.nav { flex: 1; background: #000; display: flex; align-items: center; justify-content: space-between; padding: 0 208px 0 206px; fill: #999; }
```
